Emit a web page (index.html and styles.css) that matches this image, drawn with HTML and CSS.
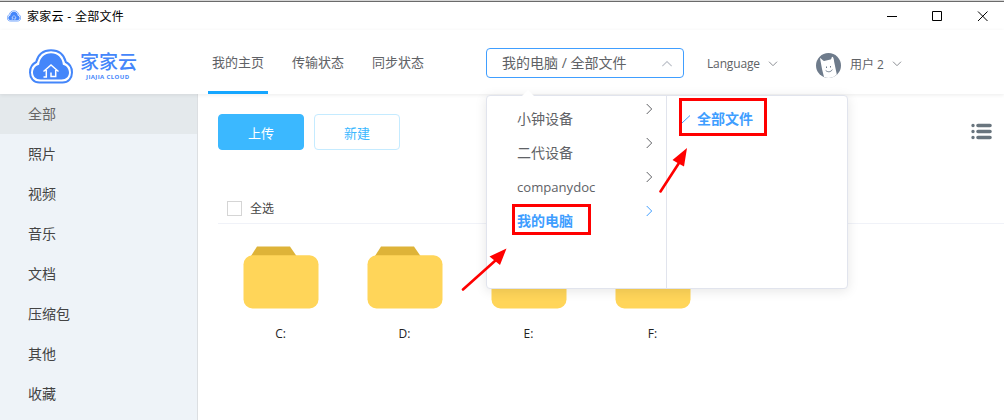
FILE: index.html
```html
<!DOCTYPE html>
<html lang="zh-CN">
<head>
<meta charset="utf-8">
<title>家家云 - 全部文件</title>
<link rel="stylesheet" href="styles.css">
</head>
<body>
<svg class="defs" width="0" height="0">
  <symbol id="cloud" viewBox="0 0 44 35">
    <path d="M10.500 33.500C4.500 33.500 1 29 1 23.500C1 18.500 3.500 14.800 7.200 13C9 5.500 14.500 1.200 22 1.200S35 5.500 36.800 13C40.500 14.800 43 18.500 43 23.500C43 29 39.500 33.500 33.500 33.500Z" fill="#fff" stroke="#4486fa" stroke-width="2"/>
    <path d="M11.500 30.500C6.800 30.500 4 27.500 4 23.800C4 19.500 6.500 16.700 10.100 15.700C10.900 8.500 15.500 4.300 22 4.300S33.100 8.500 33.900 15.700C37.500 16.700 40 19.500 40 23.800C40 27.500 37.200 30.500 32.500 30.500Z" fill="#4486fa"/>
    <path d="M14.500 22.500L22 16L29.500 22.500M17.300 21V28H14.500M26.700 21V27.500H22V23.500" fill="none" stroke="#fff" stroke-width="1.500"/>
  </symbol>
  <symbol id="folder" viewBox="0 0 76 63">
    <path d="M8 10L14 .5H47L53.500 10Z" fill="#deb338"/>
    <rect x=".5" y="9.300" width="75" height="53.200" rx="9" fill="#ffd559"/>
  </symbol>
  <symbol id="right" viewBox="0 0 7 12"><path d="M.7 1L5.700 6L.7 11" fill="none" stroke="currentColor"/></symbol>
  <symbol id="down" viewBox="0 0 10 6"><path d="M1 .7L5 4.700L9 .7" fill="none" stroke="currentColor"/></symbol>
</svg>

<div class="window">
  <div class="titlebar">
    <svg class="app-icon"><use href="#cloud"/></svg>
    <span class="title">家家云 - 全部文件</span>
    <svg class="controls" viewBox="0 0 104 12">
      <path d="M0 6.500H10M45.500 1.500H54.500V10.500H45.500ZM91 1.500L100.500 11M100.500 1.500L91 11" fill="none" stroke="#000"/>
    </svg>
  </div>

  <header class="header">
    <div class="logo">
      <svg class="logo-mark"><use href="#cloud"/></svg>
      <div class="logo-words"><b class="logo-name">家家云</b><b class="logo-sub">JIAJIA CLOUD</b></div>
    </div>
    <nav class="tabs">
      <a class="tab active">我的主页</a><a class="tab">传输状态</a><a class="tab">同步状态</a>
    </nav>
    <div class="picker">
      <span class="picked">我的电脑 / 全部文件</span>
      <svg class="chev up"><use href="#down"/></svg>
      <div class="dropdown">
        <ul class="menu">
          <li>小钟设备<svg class="right"><use href="#right"/></svg></li>
          <li>二代设备<svg class="right"><use href="#right"/></svg></li>
          <li><span class="latin">companydoc</span><svg class="right"><use href="#right"/></svg></li>
          <li class="on">我的电脑<svg class="right"><use href="#right"/></svg></li>
        </ul>
        <div class="submenu">
          <svg class="check" viewBox="0 0 9 9"><path d="M0 8L8 .5" stroke="#409eff" fill="none"/></svg>
          <span>全部文件</span>
        </div>
      </div>
    </div>
    <div class="language"><span class="lang-text">Language</span><svg class="chev"><use href="#down"/></svg></div>
    <div class="user">
      <svg class="avatar" viewBox="0 0 25 25">
        <circle cx="12.500" cy="12.500" r="12.500" fill="#6e7b8b"/>
        <path d="M4 5C5 5 7 7.800 8 8L14.500 6.500C16 6 15 3.800 16.800 3.700C18 5.500 18 8 18.400 10L20.800 21.400A12.500 12.500 0 0 1 8 24.100L6 16Z" fill="#fff"/>
        <path d="M10.500 13.500V15M14.500 13V14.500M9.700 17.500C12 19.500 15 19 16.300 16.600" stroke="#6e7b8b" fill="none"/>
      </svg>
      <span>用户 2</span><svg class="chev"><use href="#down"/></svg>
    </div>
  </header>

  <div class="body">
    <aside class="sidebar">
      <a class="side active">全部</a><a class="side">照片</a><a class="side">视频</a><a class="side">音乐</a>
      <a class="side">文档</a><a class="side">压缩包</a><a class="side">其他</a><a class="side">收藏</a>
    </aside>
    <main class="content">
      <div class="toolbar">
        <button class="btn primary">上传</button><button class="btn">新建</button>
        <svg class="list-icon" viewBox="0 0 21 17">
          <path d="M7 2.500H19M7 8.500H19M7 14.500H19" stroke="#69757e" stroke-width="3.600" stroke-linecap="round"/>
          <path d="M2 2.500H2.010M2 8.500H2.010M2 14.500H2.010" stroke="#69757e" stroke-width="3.400" stroke-linecap="round"/>
        </svg>
      </div>
      <label class="select-all"><i class="box"></i><span class="all-text">全选</span></label>
      <div class="files">
        <div class="file"><svg class="folder"><use href="#folder"/></svg>C:</div>
        <div class="file"><svg class="folder"><use href="#folder"/></svg>D:</div>
        <div class="file"><svg class="folder"><use href="#folder"/></svg>E:</div>
        <div class="file"><svg class="folder"><use href="#folder"/></svg>F:</div>
      </div>
    </main>
  </div>

  <svg class="marks" viewBox="0 0 1004 420">
    <g fill="none" stroke="#f00" stroke-width="3">
      <rect x="680.500" y="99.500" width="85" height="35"/>
      <rect x="513.500" y="205.500" width="76" height="28"/>
      <path d="M660.500 191.500L679 163M463 289.500L496 260" stroke-width="2.600" stroke-linecap="round"/>
    </g>
    <path d="M687 148L684 166.500L678.500 163.500L672.500 160ZM506.500 248.500L500 265L494.500 260.500L489.500 256.500Z" fill="#f00"/>
  </svg>
</div>
</body>
</html>
```
FILE: styles.css
```css
* { box-sizing: border-box; }
body { margin: 0; font-family: "Open Sans", "Noto Sans CJK SC", sans-serif; font-size: 14px; color: #606266; }
ul { list-style: none; margin: 0; padding: 0; }
.defs { position: absolute; }
svg { display: block; flex: none; }
.window { position: relative; width: 1004px; height: 420px; overflow: hidden; background: #fff; display: flex; flex-direction: column; border-top: 1px solid #d6d6d6; }

.titlebar { height: 29px; flex: none; border-top: 1px solid #6b6b6b; display: flex; align-items: center; padding: 1px 13px 0 7px; color: #000; font-size: 12px; }
.app-icon { width: 14px; height: 12px; margin-bottom: 2px; }
.title { margin-left: 6px; white-space: nowrap; letter-spacing: .3px; line-height: 16px; padding-top: 1px; }
.controls { width: 104px; height: 12px; margin: 0 0 2px auto; }

.header { position: relative; z-index: 2; height: 64px; flex: none; display: flex; background: #fff; box-shadow: 0 1px 4px rgba(0,0,0,.08); }
.logo { width: 208px; flex: none; display: flex; padding: 19px 0 0 29px; color: #4486fa; }
.logo-mark { width: 44px; height: 35px; }
.logo-words { margin-left: 7px; display: flex; flex-direction: column; }
.logo-name { font-size: 19px; line-height: 24px; font-weight: 500; font-family: "Noto Sans CJK SC", sans-serif; }
.logo-sub { font-size: 6px; line-height: 8px; padding-left: 6px; letter-spacing: .4px; white-space: nowrap; }
.tabs { display: flex; gap: 20px; }
.tab { width: 60px; height: 64px; line-height: 64px; text-align: center; font-size: 13px; white-space: nowrap; }
.tab.active { border-bottom: 3px solid #15a6ff; }

.picker { position: relative; width: 198px; height: 30px; margin: 18px 0 0 58px; border: 1px solid #409eff; border-radius: 4px; display: flex; align-items: center; justify-content: space-between; padding: 0 10px 0 15px; white-space: nowrap; }
.picked { padding-bottom: 2px; }
.chev { width: 10px; height: 6px; color: #8b8e94; }
.up { width: 12px; height: 7px; transform: rotate(180deg); color: #c0c4cc; }
.dropdown { position: absolute; left: -1px; top: 46px; width: 362px; height: 194px; background: #fff; border: 1px solid #e1e4ed; border-radius: 4px; box-shadow: 0 2px 12px rgba(0,0,0,.1); display: flex; }
.dropdown::before { content: ""; position: absolute; left: 35px; top: -6px; border: 6px solid transparent; border-top: 0; border-bottom-color: #fff; }
.menu { width: 180px; padding-top: 6px; border-right: 1px solid #e1e4ed; }
.menu li { height: 34px; line-height: 34px; padding: 0 13px 0 30px; display: flex; justify-content: space-between; }
.menu .on { color: #409eff; font-weight: 700; }
.latin { font-size: 13.100px; }
.right { width: 7px; height: 12px; margin-top: 1px; }
.submenu { display: flex; height: 34px; margin: 5px 0 0 15px; align-items: center; gap: 6px; color: #409eff; font-weight: 700; }
.check { width: 9px; height: 9px; margin-top: 3px; }

.language { margin-left: 23px; display: flex; align-items: center; gap: 9px; height: 67px; font-size: 12px; }
.lang-text { width: 52px; letter-spacing: -.15px; }
.user { margin-left: 38px; display: flex; align-items: center; height: 67px; font-size: 12px; }
.avatar { width: 25px; height: 25px; margin: 4px 9px 0 0; }
.user .chev { margin-left: 8px; }

.body { display: flex; flex: 1; min-height: 0; }
.sidebar { width: 198px; flex: none; background: #eef3f8; border-right: 1px solid #dcdfe2; color: #444; }
.side { display: block; height: 40px; line-height: 40px; padding-left: 28px; }
.side.active { background: #e4e9ec; color: #666; }
.content { flex: 1; padding: 20px 0 0 20px; }
.toolbar { display: flex; gap: 10px; height: 82px; padding-right: 12px; }
.btn { width: 86px; height: 36px; padding: 0; border: 1px solid #c5ebff; border-radius: 4px; background: #fff; color: #3bb8ff; font: inherit; font-size: 13px; }
.primary { background: #3bb8ff; border-color: #3bb8ff; color: #fff; }
.list-icon { width: 21px; height: 17px; margin: 9px 0 0 auto; }
.select-all { display: flex; align-items: center; height: 28px; padding: 0 0 2px 9px; border-bottom: 1px solid #f0f2f8; font-size: 12px; color: #444; }
.box { width: 15px; height: 15px; margin-right: 8px; border: 1px solid #d5d5d5; }
.all-text { line-height: 16px; padding-top: 1px; }
.files { display: flex; padding: 22px 0 0 .5px; }
.file { width: 124px; display: flex; flex-direction: column; align-items: center; font-size: 12px; line-height: 18px; color: #222; }
.folder { width: 76px; height: 63px; margin-bottom: 16px; }
.marks { position: absolute; z-index: 3; left: 0; top: -1px; width: 1004px; height: 420px; pointer-events: none; }
```
